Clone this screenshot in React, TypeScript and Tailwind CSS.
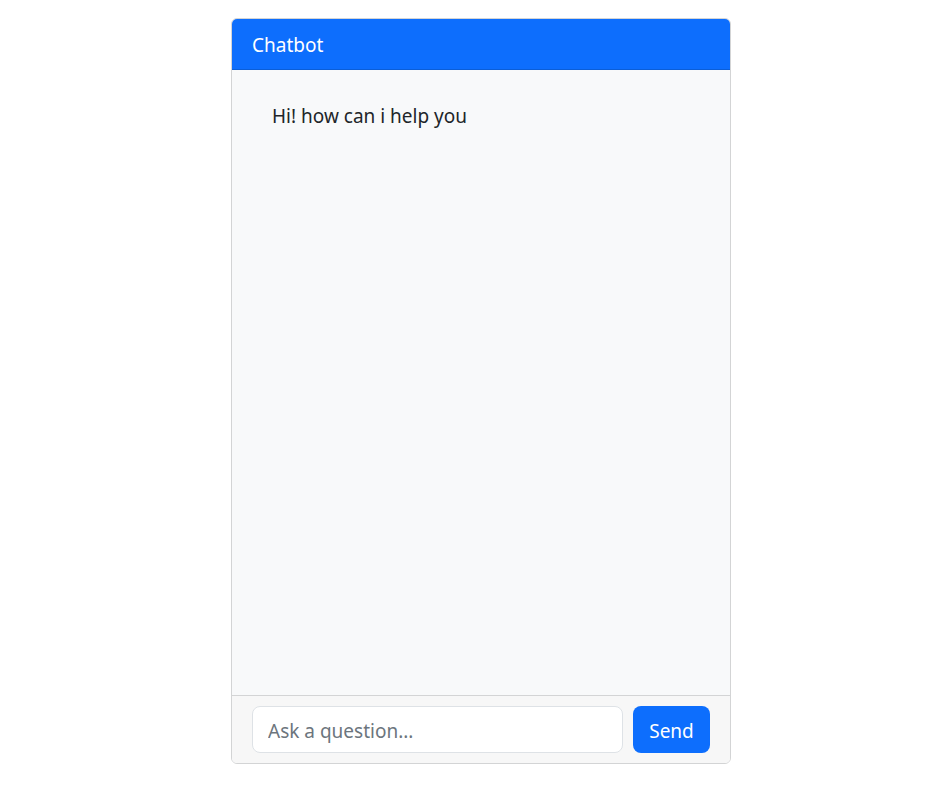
import React, { useState } from "react";

const App: React.FC = () => {
  const [question, setQuestion] = useState("");
  return (
    <div
      className="min-h-screen bg-white pl-[231px] pt-[18px] text-[#212529]"
      style={{ fontFamily: '"Noto Sans", "Open Sans", sans-serif' }}
    >
      <div className="flex h-[746px] w-[500px] flex-col overflow-hidden rounded-[6px] border border-[#d3d4d5]">
        {/* Header */}
        <div className="border-b border-[#0b5ed7] bg-[#0d6efd] px-[20px] pt-[11px] pb-[9px] text-[19px] leading-[30px] text-white">
          Chatbot
        </div>

        {/* Messages */}
        <div className="flex-1 bg-[#f8f9fa] px-[40px] pt-[31px] text-[19px] leading-[30px]">
          Hi! how can i help you
        </div>

        {/* Footer */}
        <div className="flex gap-[10px] border-t border-[#d3d4d5] bg-[#f7f7f7] px-[20px] py-[10px]">
          <input
            value={question}
            onChange={(e) => setQuestion(e.target.value)}
            placeholder="Ask a question..."
            className="h-[47px] flex-1 rounded-[8px] border border-[#dee2e6] bg-white px-[15px] pt-[2px] text-[19px] text-[#212529] outline-none placeholder:text-[#6c757d]"
          />
          <button className="h-[47px] w-[77px] rounded-[8px] bg-[#0d6efd] pt-[3px] text-[19px] text-white">
            Send
          </button>
        </div>
      </div>
    </div>
  );
};

export default App;
